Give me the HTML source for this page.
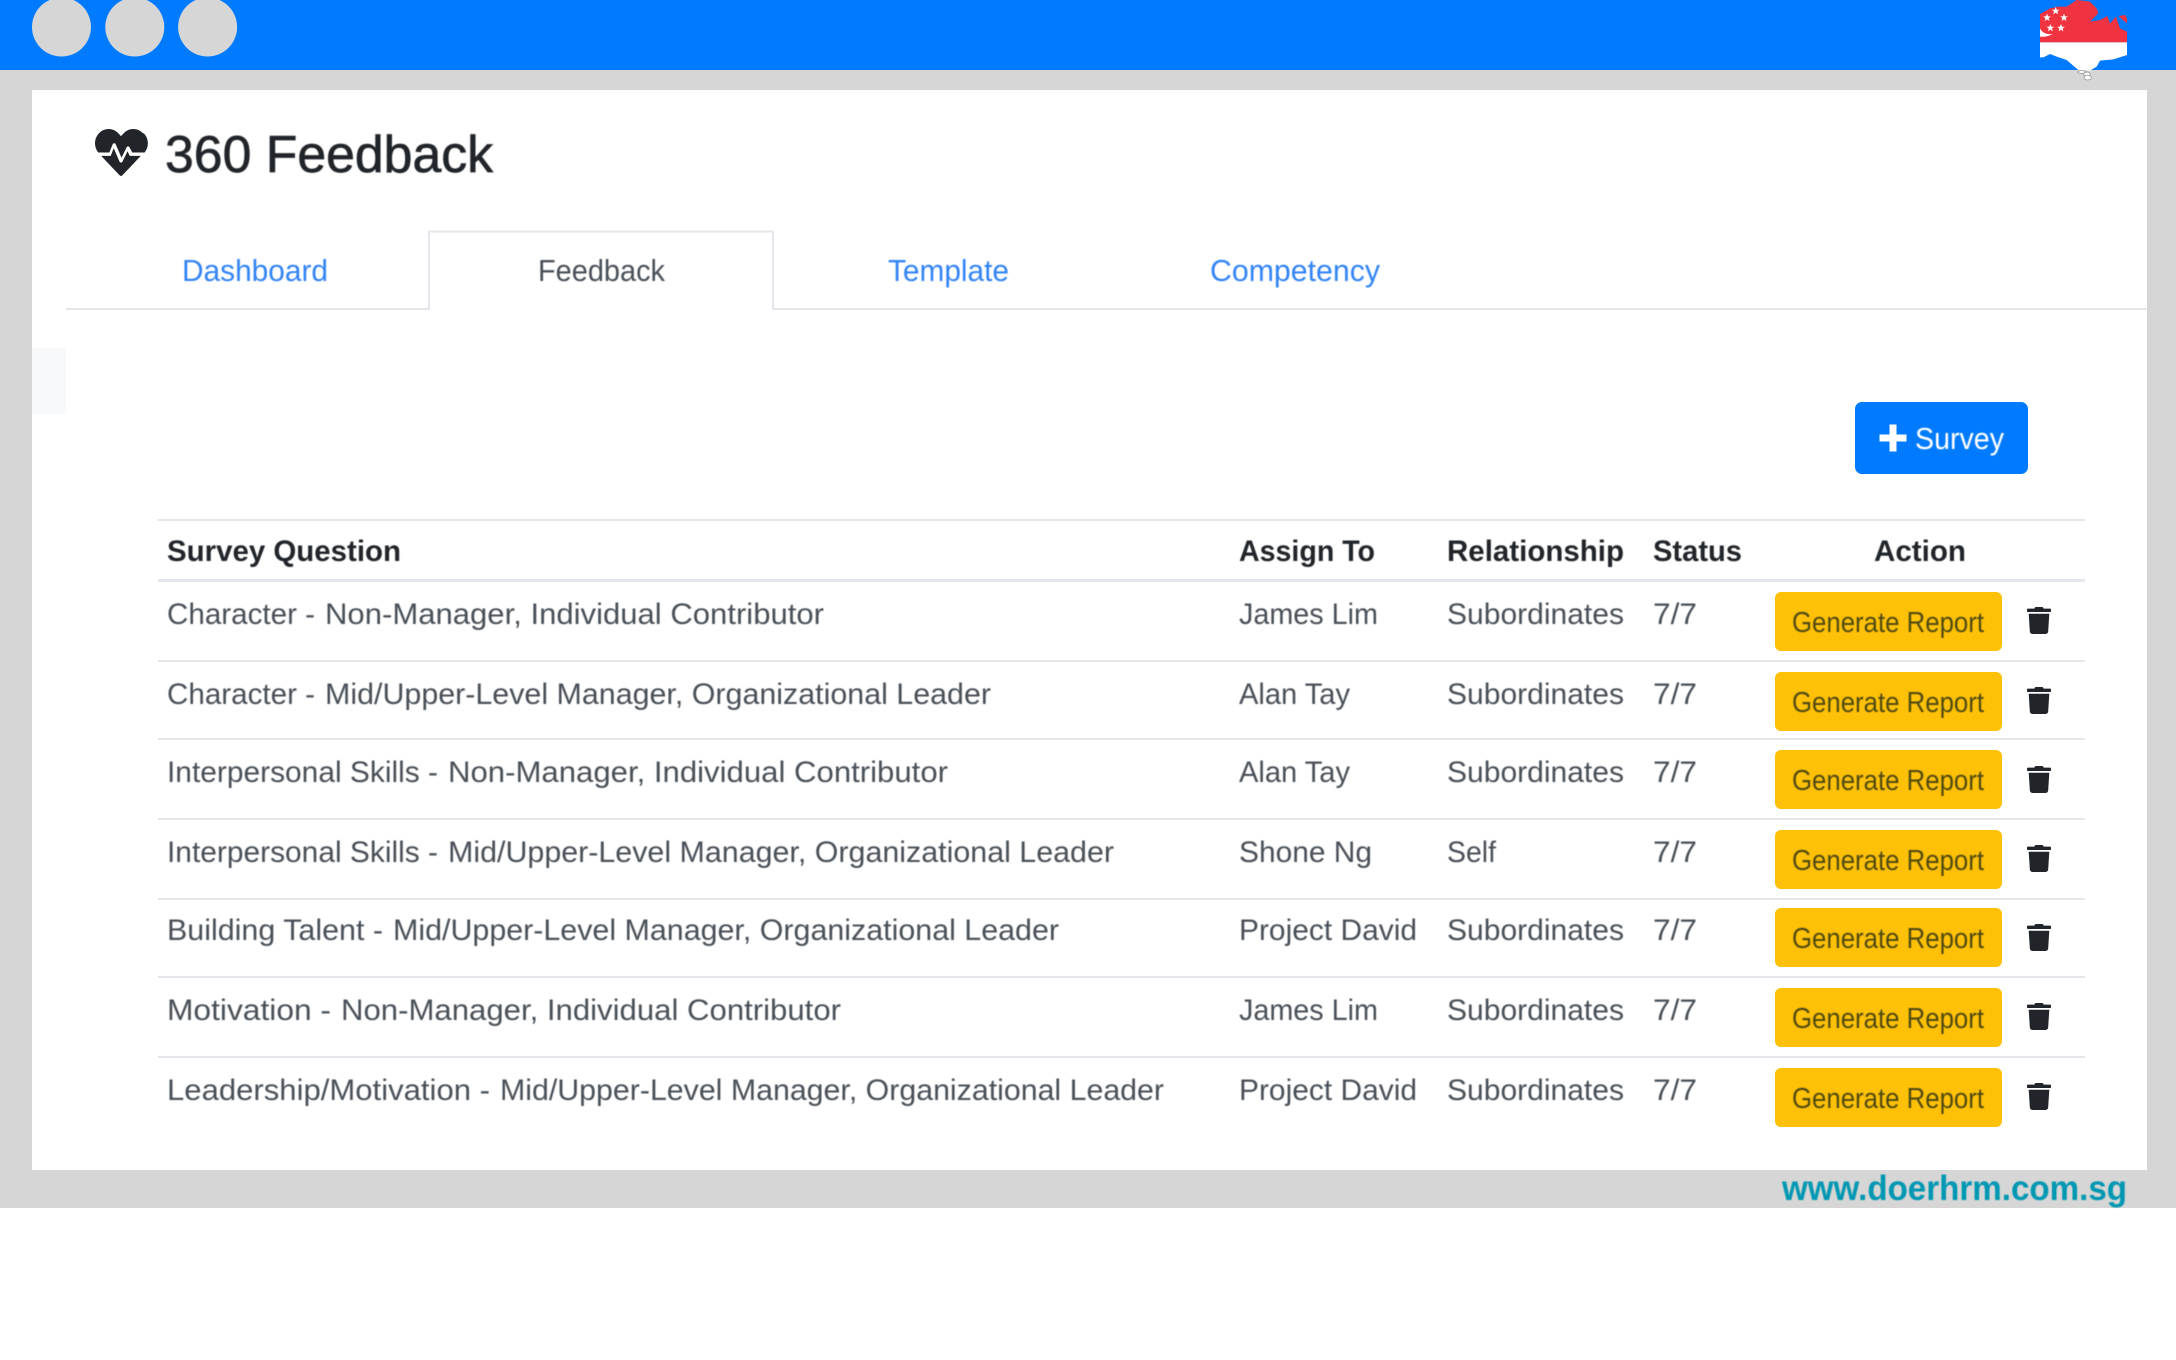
<!DOCTYPE html>
<html lang="en">
<head>
<meta charset="utf-8">
<title>360 Feedback</title>
<style>
html,body{margin:0;padding:0;width:2176px;height:1360px;overflow:hidden;background:#fff}
svg{display:block}
text{font-family:"Liberation Sans",sans-serif;filter:blur(.4px)}
.q{font-size:30px;fill:#495057}
.h{font-size:30px;font-weight:700;fill:#212529}
.t{font-size:31px;fill:#3284f5}
.g{font-size:29px;fill:#4f4a12}
</style>
</head>
<body>
<svg xmlns="http://www.w3.org/2000/svg" width="2176" height="1360" viewBox="0 0 2176 1360">
<defs>
<path id="tr" d="M432 32H312l-9.4-18.700A24 24 0 0 0 281.100 0H166.800a23.720 23.720 0 0 0-21.400 13.300L136 32H16A16 16 0 0 0 0 48v32a16 16 0 0 0 16 16h416a16 16 0 0 0 16-16V48a16 16 0 0 0-16-16zM53.200 467a48 48 0 0 0 47.900 45h245.800a48 48 0 0 0 47.900-45L416 128H32z"/>
<polygon id="st" points="0,-12 3.200,-3.800 11.500,-3.700 5,1.500 7.200,10 0,5 -7.200,10 -5,1.500 -11.500,-3.700 -3.200,-3.800"/>
</defs>

<rect width="2176" height="1360" fill="#fff"/>
<rect y="70" width="2176" height="1138" fill="#d6d6d6"/>
<rect width="2176" height="70" fill="#007bff"/>
<circle cx="61.500" cy="27" r="29.500" fill="#d6d6d6"/>
<circle cx="134.800" cy="27" r="29.500" fill="#d6d6d6"/>
<circle cx="207.600" cy="27" r="29.500" fill="#d6d6d6"/>

<g transform="translate(2030 0) scale(.33333)">
<path fill="#ef3340" d="M30 42L60 25L85 20L110 20L140 0L180 5L200 25L205 40L180 65L210 60L232 48L240 70L258 50L270 85L291 95V127H30Z"/>
<path fill="#ef3340" d="M265 48L285 45L291 55V70Z"/>
<path fill="#fff" d="M30 127H291V165L250 178L210 182L200 200L180 212L145 210L110 180L80 170L60 162L40 172H30Z"/>
<path fill="#fff" d="M30 85Q40 105 68 102Q50 112 30 110Z"/>
<g fill="#fff">
<use href="#st" x="51" y="53"/><use href="#st" x="77" y="33"/><use href="#st" x="102" y="53"/><use href="#st" x="61" y="84"/><use href="#st" x="93" y="84"/>
</g>
<ellipse cx="155" cy="216" rx="12" ry="4" fill="#fff" stroke="#888" stroke-width="2"/>
<ellipse cx="171" cy="222" rx="10" ry="6" fill="#fff" stroke="#888" stroke-width="2"/>
<ellipse cx="173" cy="233" rx="11" ry="7" fill="#fff" stroke="#888" stroke-width="2"/>
</g>

<rect x="32" y="90" width="2115" height="1080" fill="#fff"/>
<rect x="32" y="348" width="34" height="66" fill="#f8f9fa"/>

<path fill="#212529" transform="translate(95 125.600) scale(.1015 .105)" d="M320.200 243.800l-49.700 99.400c-6 12.100-23.400 11.700-28.900-.6l-56.900-126.300-30 71.700H60.600l182.500 186.500c7.100 7.300 18.600 7.300 25.700 0L451.400 288H342.300l-22.100-44.200zM473.700 73.900l-2.400-2.500c-51.500-52.600-135.800-52.600-187.400 0L256 100l-27.900-28.500c-51.500-52.700-135.900-52.700-187.400 0l-2.400 2.400C-10.400 123.600-12.500 202.300 32 256h109.400l32.400-77.700c5.500-13.200 23.900-13.500 29.900-.6l57.800 128.400 49.700-99.300c5.900-11.800 22.700-11.800 28.600 0l27.600 49.200h121.900c44.500-53.700 42.400-132.400-7.600-182.100z"/>
<text x="165" y="172" font-size="52" fill="#212529" stroke="#212529" stroke-width=".7" textLength="328" lengthAdjust="spacingAndGlyphs">360 Feedback</text>

<path d="M66 309H429V231.500H773V309H2147" fill="none" stroke="#e3e6ea" stroke-width="2"/>
<text class="t" x="182" y="281" textLength="146" lengthAdjust="spacingAndGlyphs">Dashboard</text>
<text x="538" y="281" font-size="31" fill="#495057" textLength="127" lengthAdjust="spacingAndGlyphs">Feedback</text>
<text class="t" x="888" y="281" textLength="121" lengthAdjust="spacingAndGlyphs">Template</text>
<text class="t" x="1210" y="281" textLength="170" lengthAdjust="spacingAndGlyphs">Competency</text>

<rect x="1855" y="402" width="173" height="72" rx="7" fill="#007bff"/>
<path d="M1879.500 438H1906.500M1893 424.500V451.500" stroke="#fff" stroke-width="7" fill="none"/>
<text x="1915" y="449" font-size="31" fill="#fff" textLength="89" lengthAdjust="spacingAndGlyphs">Survey</text>

<g fill="#e3e6ea">
<rect x="158" y="519" width="1927" height="2"/>
<rect x="158" y="579" width="1927" height="3"/>
<rect x="158" y="660" width="1927" height="2"/>
<rect x="158" y="738" width="1927" height="2"/>
<rect x="158" y="818" width="1927" height="2"/>
<rect x="158" y="898" width="1927" height="2"/>
<rect x="158" y="976" width="1927" height="2"/>
<rect x="158" y="1056" width="1927" height="2"/>
</g>

<text class="h" x="167" y="561" textLength="234" lengthAdjust="spacingAndGlyphs">Survey Question</text>
<text class="h" x="1239" y="561" textLength="136" lengthAdjust="spacingAndGlyphs">Assign To</text>
<text class="h" x="1447" y="561" textLength="177" lengthAdjust="spacingAndGlyphs">Relationship</text>
<text class="h" x="1653" y="561" textLength="89" lengthAdjust="spacingAndGlyphs">Status</text>
<text class="h" x="1874" y="561" textLength="92" lengthAdjust="spacingAndGlyphs">Action</text>

<text class="q" x="167" y="624" textLength="148" lengthAdjust="spacingAndGlyphs">Character -</text>
<text class="q" x="325" y="624" textLength="499" lengthAdjust="spacingAndGlyphs">Non-Manager, Individual Contributor</text>
<text class="q" x="1239" y="624" textLength="139" lengthAdjust="spacingAndGlyphs">James Lim</text>
<text class="q" x="1447" y="624" textLength="177" lengthAdjust="spacingAndGlyphs">Subordinates</text>
<text class="q" x="1653" y="624" textLength="44" lengthAdjust="spacingAndGlyphs">7/7</text>
<rect x="1775" y="592" width="227" height="59" rx="6" fill="#ffc107"/>
<text class="g" x="1792" y="632" textLength="192" lengthAdjust="spacingAndGlyphs">Generate Report</text>
<use href="#tr" fill="#212529" transform="translate(2027 607) scale(.0536 .0527)"/>

<text class="q" x="167" y="704" textLength="148" lengthAdjust="spacingAndGlyphs">Character -</text>
<text class="q" x="325" y="704" textLength="666" lengthAdjust="spacingAndGlyphs">Mid/Upper-Level Manager, Organizational Leader</text>
<text class="q" x="1239" y="704" textLength="111" lengthAdjust="spacingAndGlyphs">Alan Tay</text>
<text class="q" x="1447" y="704" textLength="177" lengthAdjust="spacingAndGlyphs">Subordinates</text>
<text class="q" x="1653" y="704" textLength="44" lengthAdjust="spacingAndGlyphs">7/7</text>
<rect x="1775" y="672" width="227" height="59" rx="6" fill="#ffc107"/>
<text class="g" x="1792" y="712" textLength="192" lengthAdjust="spacingAndGlyphs">Generate Report</text>
<use href="#tr" fill="#212529" transform="translate(2027 687) scale(.0536 .0527)"/>

<text class="q" x="167" y="782" textLength="271" lengthAdjust="spacingAndGlyphs">Interpersonal Skills -</text>
<text class="q" x="448" y="782" textLength="500" lengthAdjust="spacingAndGlyphs">Non-Manager, Individual Contributor</text>
<text class="q" x="1239" y="782" textLength="111" lengthAdjust="spacingAndGlyphs">Alan Tay</text>
<text class="q" x="1447" y="782" textLength="177" lengthAdjust="spacingAndGlyphs">Subordinates</text>
<text class="q" x="1653" y="782" textLength="44" lengthAdjust="spacingAndGlyphs">7/7</text>
<rect x="1775" y="750" width="227" height="59" rx="6" fill="#ffc107"/>
<text class="g" x="1792" y="790" textLength="192" lengthAdjust="spacingAndGlyphs">Generate Report</text>
<use href="#tr" fill="#212529" transform="translate(2027 766) scale(.0536 .0527)"/>

<text class="q" x="167" y="862" textLength="271" lengthAdjust="spacingAndGlyphs">Interpersonal Skills -</text>
<text class="q" x="448" y="862" textLength="666" lengthAdjust="spacingAndGlyphs">Mid/Upper-Level Manager, Organizational Leader</text>
<text class="q" x="1239" y="862" textLength="133" lengthAdjust="spacingAndGlyphs">Shone Ng</text>
<text class="q" x="1447" y="862" textLength="49" lengthAdjust="spacingAndGlyphs">Self</text>
<text class="q" x="1653" y="862" textLength="44" lengthAdjust="spacingAndGlyphs">7/7</text>
<rect x="1775" y="830" width="227" height="59" rx="6" fill="#ffc107"/>
<text class="g" x="1792" y="870" textLength="192" lengthAdjust="spacingAndGlyphs">Generate Report</text>
<use href="#tr" fill="#212529" transform="translate(2027 845) scale(.0536 .0527)"/>

<text class="q" x="167" y="940" textLength="216" lengthAdjust="spacingAndGlyphs">Building Talent -</text>
<text class="q" x="393" y="940" textLength="666" lengthAdjust="spacingAndGlyphs">Mid/Upper-Level Manager, Organizational Leader</text>
<text class="q" x="1239" y="940" textLength="178" lengthAdjust="spacingAndGlyphs">Project David</text>
<text class="q" x="1447" y="940" textLength="177" lengthAdjust="spacingAndGlyphs">Subordinates</text>
<text class="q" x="1653" y="940" textLength="44" lengthAdjust="spacingAndGlyphs">7/7</text>
<rect x="1775" y="908" width="227" height="59" rx="6" fill="#ffc107"/>
<text class="g" x="1792" y="948" textLength="192" lengthAdjust="spacingAndGlyphs">Generate Report</text>
<use href="#tr" fill="#212529" transform="translate(2027 924) scale(.0536 .0527)"/>

<text class="q" x="167" y="1020" textLength="164" lengthAdjust="spacingAndGlyphs">Motivation -</text>
<text class="q" x="341" y="1020" textLength="500" lengthAdjust="spacingAndGlyphs">Non-Manager, Individual Contributor</text>
<text class="q" x="1239" y="1020" textLength="139" lengthAdjust="spacingAndGlyphs">James Lim</text>
<text class="q" x="1447" y="1020" textLength="177" lengthAdjust="spacingAndGlyphs">Subordinates</text>
<text class="q" x="1653" y="1020" textLength="44" lengthAdjust="spacingAndGlyphs">7/7</text>
<rect x="1775" y="988" width="227" height="59" rx="6" fill="#ffc107"/>
<text class="g" x="1792" y="1028" textLength="192" lengthAdjust="spacingAndGlyphs">Generate Report</text>
<use href="#tr" fill="#212529" transform="translate(2027 1003) scale(.0536 .0527)"/>

<text class="q" x="167" y="1100" textLength="323" lengthAdjust="spacingAndGlyphs">Leadership/Motivation -</text>
<text class="q" x="500" y="1100" textLength="664" lengthAdjust="spacingAndGlyphs">Mid/Upper-Level Manager, Organizational Leader</text>
<text class="q" x="1239" y="1100" textLength="178" lengthAdjust="spacingAndGlyphs">Project David</text>
<text class="q" x="1447" y="1100" textLength="177" lengthAdjust="spacingAndGlyphs">Subordinates</text>
<text class="q" x="1653" y="1100" textLength="44" lengthAdjust="spacingAndGlyphs">7/7</text>
<rect x="1775" y="1068" width="227" height="59" rx="6" fill="#ffc107"/>
<text class="g" x="1792" y="1108" textLength="192" lengthAdjust="spacingAndGlyphs">Generate Report</text>
<use href="#tr" fill="#212529" transform="translate(2027 1083) scale(.0536 .0527)"/>

<text x="1782" y="1200" font-size="35" font-weight="700" fill="#0097b2" textLength="345" lengthAdjust="spacingAndGlyphs">www.doerhrm.com.sg</text>
</svg>
</body>
</html>
